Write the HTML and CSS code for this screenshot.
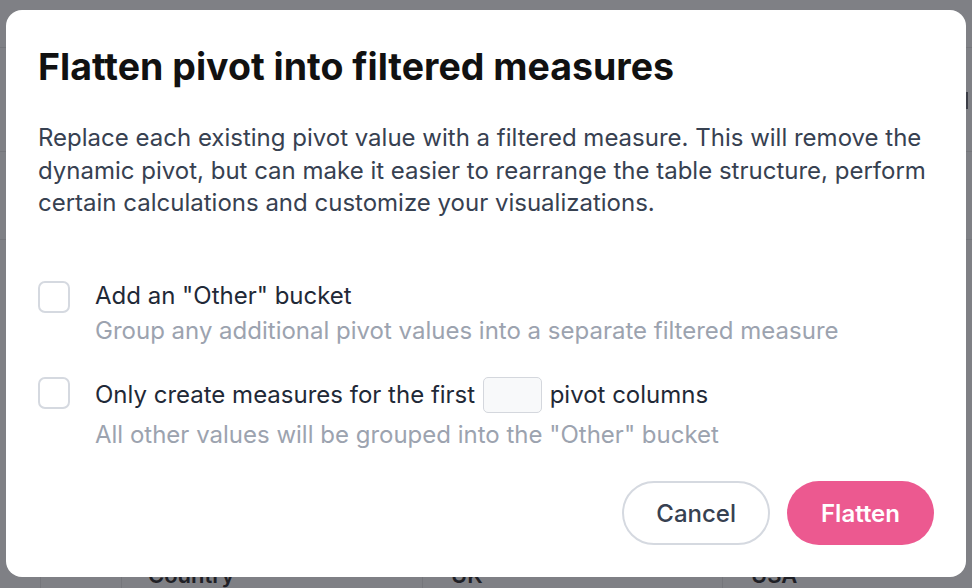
FILE: index.html
```html
<!DOCTYPE html>
<html lang="en">
<head>
<meta charset="utf-8">
<title>Flatten pivot</title>
<link rel="stylesheet" href="styles.css">
</head>
<body>
<div class="page">
  <div class="bg-row r1"></div>
  <div class="bg-row r2"><span class="edge-mark"></span></div>
  <div class="bg-row r3"></div>
  <div class="bg-spacer"></div>
  <div class="bg-table">
    <div class="cell c0"></div>
    <div class="cell c1"></div>
    <div class="cell c2">Country</div>
    <div class="cell c3">UK</div>
    <div class="cell c4">USA</div>
  </div>
</div>

<div class="overlay">
  <div class="modal">
    <h1 class="title">Flatten pivot into filtered measures</h1>
    <p class="desc">Replace each existing pivot value with a filtered measure. This will remove the dynamic pivot, but can make it easier to rearrange the table structure, perform certain calculations and customize your visualizations.</p>

    <div class="options">
      <div class="option">
        <span class="checkbox"></span>
        <div class="option-text">
          <div class="label">Add an "Other" bucket</div>
          <div class="hint">Group any additional pivot values into a separate filtered measure</div>
        </div>
      </div>
      <div class="option option-input">
        <span class="checkbox"></span>
        <div class="option-text">
          <div class="label label-input">Only create measures for the first <span class="num-input"></span> pivot columns</div>
          <div class="hint">All other values will be grouped into the "Other" bucket</div>
        </div>
      </div>
    </div>

    <div class="actions">
      <button class="btn btn-cancel">Cancel</button>
      <button class="btn btn-primary">Flatten</button>
    </div>
  </div>
</div>
</body>
</html>
```
FILE: styles.css
```css
html, body {
  margin: 0;
  padding: 0;
  width: 972px;
  height: 588px;
  overflow: hidden;
}
body {
  background: #7f8085;
  font-family: Inter, "Noto Sans", sans-serif;
  position: relative;
}
.page {
  display: flex;
  flex-direction: column;
  height: 588px;
}
.bg-row {
  border-bottom: 1px solid #75767b;
  position: relative;
}
.r1 { height: 47px; }
.r2 { height: 103px; }
.r3 { height: 87px; }
.edge-mark {
  position: absolute;
  left: 966px;
  top: 44px;
  width: 2px;
  height: 17px;
  background: #3c3e47;
}
.bg-spacer { flex: 1; }
.bg-table {
  display: flex;
  height: 40px;
  flex-shrink: 0;
}
.cell {
  border-left: 1px solid #75767b;
  font-size: 22px;
  font-weight: 600;
  color: #1f2026;
  padding: 14px 0 0 26px;
  box-sizing: border-box;
}
.c0 { width: 40px; border-left: none; padding: 0; }
.c1 { width: 81px; padding: 0; }
.c2 { width: 301px; }
.c3 { width: 300px; padding-left: 28px; }
.c4 { flex: 1; padding-left: 28px; }

.overlay {
  position: absolute;
  inset: 0;
  padding: 10px 6px 11px 6px;
  display: flex;
}
.modal {
  flex: 1;
  background: #ffffff;
  border-radius: 16px;
  padding: 34px 32px 32px 32px;
  display: flex;
  flex-direction: column;
  box-sizing: border-box;
}
.title {
  margin: 0;
  font-size: 37.5px;
  line-height: 46px;
  font-weight: 700;
  color: #111111;
}
.desc {
  margin: 32px 0 0 0;
  font-size: 24px;
  line-height: 32.5px;
  color: #374151;
}
.options {
  margin-top: 60px;
  display: flex;
  flex-direction: column;
  gap: 30px;
}
.option {
  display: flex;
  align-items: flex-start;
  gap: 25px;
}
.checkbox {
  width: 28px;
  height: 28px;
  border: 2px solid #d5d9e0;
  border-radius: 7px;
  flex-shrink: 0;
  margin-top: 1px;
}
.option-input .checkbox {
  margin-top: 0;
}
.option-text {
  display: flex;
  flex-direction: column;
}
.label {
  font-size: 24px;
  line-height: 32px;
  color: #1f2937;
}
.label-input {
  display: flex;
  align-items: center;
  height: 36px;
  white-space: pre;
}
.num-input {
  display: inline-block;
  width: 57px;
  height: 34px;
  border: 1px solid #d4d7dd;
  border-radius: 5px;
  background: #f8f9fa;
  margin: 0 1px;
}
.hint {
  margin-top: 3px;
  font-size: 24px;
  line-height: 32px;
  color: #9ca3af;
}
.option-input .hint {
  margin-top: 6px;
}
.actions {
  margin-top: auto;
  display: flex;
  justify-content: flex-end;
  gap: 17px;
}
.btn {
  height: 64px;
  border-radius: 32px;
  font-family: Inter, "Noto Sans", sans-serif;
  font-size: 24px;
  padding: 0 34px;
  box-sizing: border-box;
  cursor: pointer;
}
.btn-cancel {
  background: #ffffff;
  border: 2px solid #d5d9e0;
  color: #374151;
  font-weight: 500;
  padding: 0 32px;
}
.btn-primary {
  background: #ec5990;
  border: none;
  color: #ffffff;
  font-weight: 600;
}
```
